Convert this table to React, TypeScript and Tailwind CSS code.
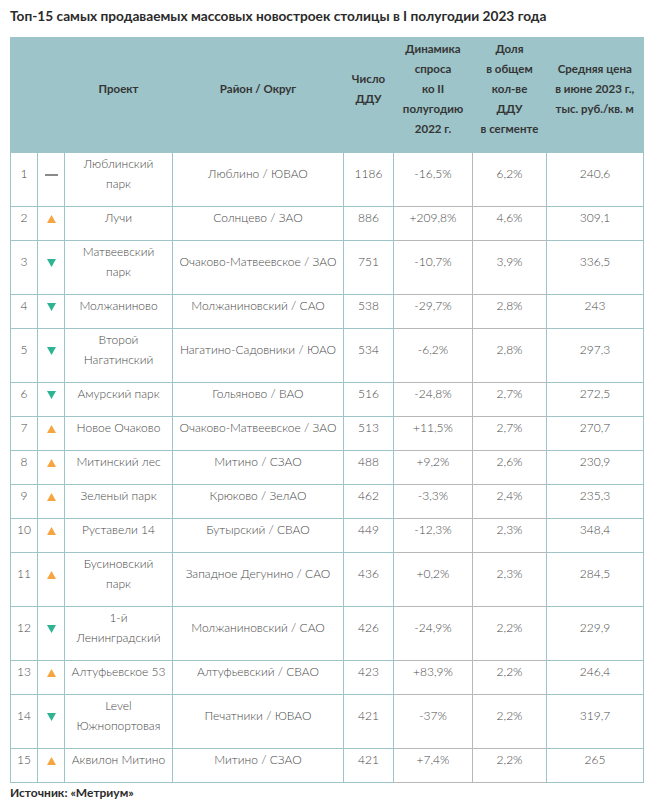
import React from 'react';

type Trend = 'up' | 'down' | 'flat';

interface Row {
  n: number;
  trend: Trend;
  project: string[];
  district: string;
  ddu: string;
  dyn: string;
  share: string;
  price: string;
}

const rows: Row[] = [
  { n: 1, trend: 'flat', project: ['Люблинский', 'парк'], district: 'Люблино / ЮВАО', ddu: '1186', dyn: '-16,5%', share: '6,2%', price: '240,6' },
  { n: 2, trend: 'up', project: ['Лучи'], district: 'Солнцево / ЗАО', ddu: '886', dyn: '+209,8%', share: '4,6%', price: '309,1' },
  { n: 3, trend: 'down', project: ['Матвеевский', 'парк'], district: 'Очаково-Матвеевское / ЗАО', ddu: '751', dyn: '-10,7%', share: '3,9%', price: '336,5' },
  { n: 4, trend: 'down', project: ['Молжаниново'], district: 'Молжаниновский / САО', ddu: '538', dyn: '-29,7%', share: '2,8%', price: '243' },
  { n: 5, trend: 'down', project: ['Второй', 'Нагатинский'], district: 'Нагатино-Садовники / ЮАО', ddu: '534', dyn: '-6,2%', share: '2,8%', price: '297,3' },
  { n: 6, trend: 'down', project: ['Амурский парк'], district: 'Гольяново / ВАО', ddu: '516', dyn: '-24,8%', share: '2,7%', price: '272,5' },
  { n: 7, trend: 'up', project: ['Новое Очаково'], district: 'Очаково-Матвеевское / ЗАО', ddu: '513', dyn: '+11,5%', share: '2,7%', price: '270,7' },
  { n: 8, trend: 'up', project: ['Митинский лес'], district: 'Митино / СЗАО', ddu: '488', dyn: '+9,2%', share: '2,6%', price: '230,9' },
  { n: 9, trend: 'up', project: ['Зеленый парк'], district: 'Крюково / ЗелАО', ddu: '462', dyn: '-3,3%', share: '2,4%', price: '235,3' },
  { n: 10, trend: 'up', project: ['Руставели 14'], district: 'Бутырский / СВАО', ddu: '449', dyn: '-12,3%', share: '2,3%', price: '348,4' },
  { n: 11, trend: 'up', project: ['Бусиновский', 'парк'], district: 'Западное Дегунино / САО', ddu: '436', dyn: '+0,2%', share: '2,3%', price: '284,5' },
  { n: 12, trend: 'down', project: ['1-й', 'Ленинградский'], district: 'Молжаниновский / САО', ddu: '426', dyn: '-24,9%', share: '2,2%', price: '229,9' },
  { n: 13, trend: 'up', project: ['Алтуфьевское 53'], district: 'Алтуфьевский / СВАО', ddu: '423', dyn: '+83,9%', share: '2,2%', price: '246,4' },
  { n: 14, trend: 'down', project: ['Level', 'Южнопортовая'], district: 'Печатники / ЮВАО', ddu: '421', dyn: '-37%', share: '2,2%', price: '319,7' },
  { n: 15, trend: 'up', project: ['Аквилон Митино'], district: 'Митино / СЗАО', ddu: '421', dyn: '+7,4%', share: '2,2%', price: '265' },
];

const TrendIcon = ({ trend }: { trend: Trend }) => {
  if (trend === 'flat') {
    return <span className="inline-block w-[13px] h-[2px] bg-[#8a8a8a] align-middle" />;
  }
  return (
    <svg width="9" height="8" viewBox="0 0 9 8" className="inline-block align-middle">
      {trend === 'up' ? (
        <polygon points="4.5,0 9,8 0,8" fill="#f7a541" />
      ) : (
        <polygon points="0,0 9,0 4.5,8" fill="#2fb394" />
      )}
    </svg>
  );
};

const base = 'border border-[#9dc5c9] text-center align-middle pt-px pb-[12px] px-0 whitespace-nowrap';
const td = base;
const tdGrayB = base + ' border-b-[#b8b8b8]';
const tdDyn = base + ' border-x-[#b8b8b8] border-b-[#b8b8b8]';

const App = () => {
  return (
    <div className="w-[657px] bg-white pt-[7px] px-[10px] font-['Lato',sans-serif]">
      <h1 className="text-[13.7px] font-bold text-[#2b2b2b] leading-[18px] mb-[12px]">
        Топ-15 самых продаваемых массовых новостроек столицы в I полугодии 2023 года
      </h1>

      <table className="w-[633px] table-fixed border-collapse border border-[#9dc5c9] text-[12px] font-light leading-5 text-[#4a4a4a]">
        <colgroup>
          <col className="w-[27px]" />
          <col className="w-[27px]" />
          <col className="w-[108px]" />
          <col className="w-[171px]" />
          <col className="w-[50px]" />
          <col className="w-[79px]" />
          <col className="w-[74px]" />
          <col className="w-[97px]" />
        </colgroup>
        <thead>
          <tr className="h-[115px] bg-[#9cc4c9] text-[11.5px] font-bold text-[#353535]">
            <th />
            <th />
            <th className="align-middle pb-[12px]">Проект</th>
            <th className="align-middle pb-[12px]">Район / Округ</th>
            <th className="align-middle pb-[12px]">
              Число
              <br />
              ДДУ
            </th>
            <th className="align-middle pb-[12px]">
              Динамика
              <br />
              спроса
              <br />
              ко II
              <br />
              полугодию
              <br />
              2022 г.
            </th>
            <th className="align-middle pb-[12px]">
              Доля
              <br />
              в общем
              <br />
              кол-ве
              <br />
              ДДУ
              <br />
              в сегменте
            </th>
            <th className="align-middle pb-[12px]">
              Средняя цена
              <br />
              в июне 2023 г.,
              <br />
              тыс. руб./кв. м
            </th>
          </tr>
        </thead>
        <tbody>
          {rows.map((r) => (
            <tr key={r.n} className={r.project.length > 1 ? 'h-[54px]' : 'h-[33px]'}>
              <td className={td}>{r.n}</td>
              <td className={td}>
                <TrendIcon trend={r.trend} />
              </td>
              <td className={td}>
                {r.project.map((p, i) => (
                  <div key={i}>{p}</div>
                ))}
              </td>
              <td className={td}>{r.district}</td>
              <td className={td}>{r.ddu}</td>
              <td className={tdDyn}>{r.dyn}</td>
              <td className={tdGrayB}>{r.share}</td>
              <td className={td}>{r.price}</td>
            </tr>
          ))}
        </tbody>
      </table>

      <p className="text-[12px] font-bold text-[#2b2b2b] leading-5">Источник: «Метриум»</p>
    </div>
  );
};

export default App;
